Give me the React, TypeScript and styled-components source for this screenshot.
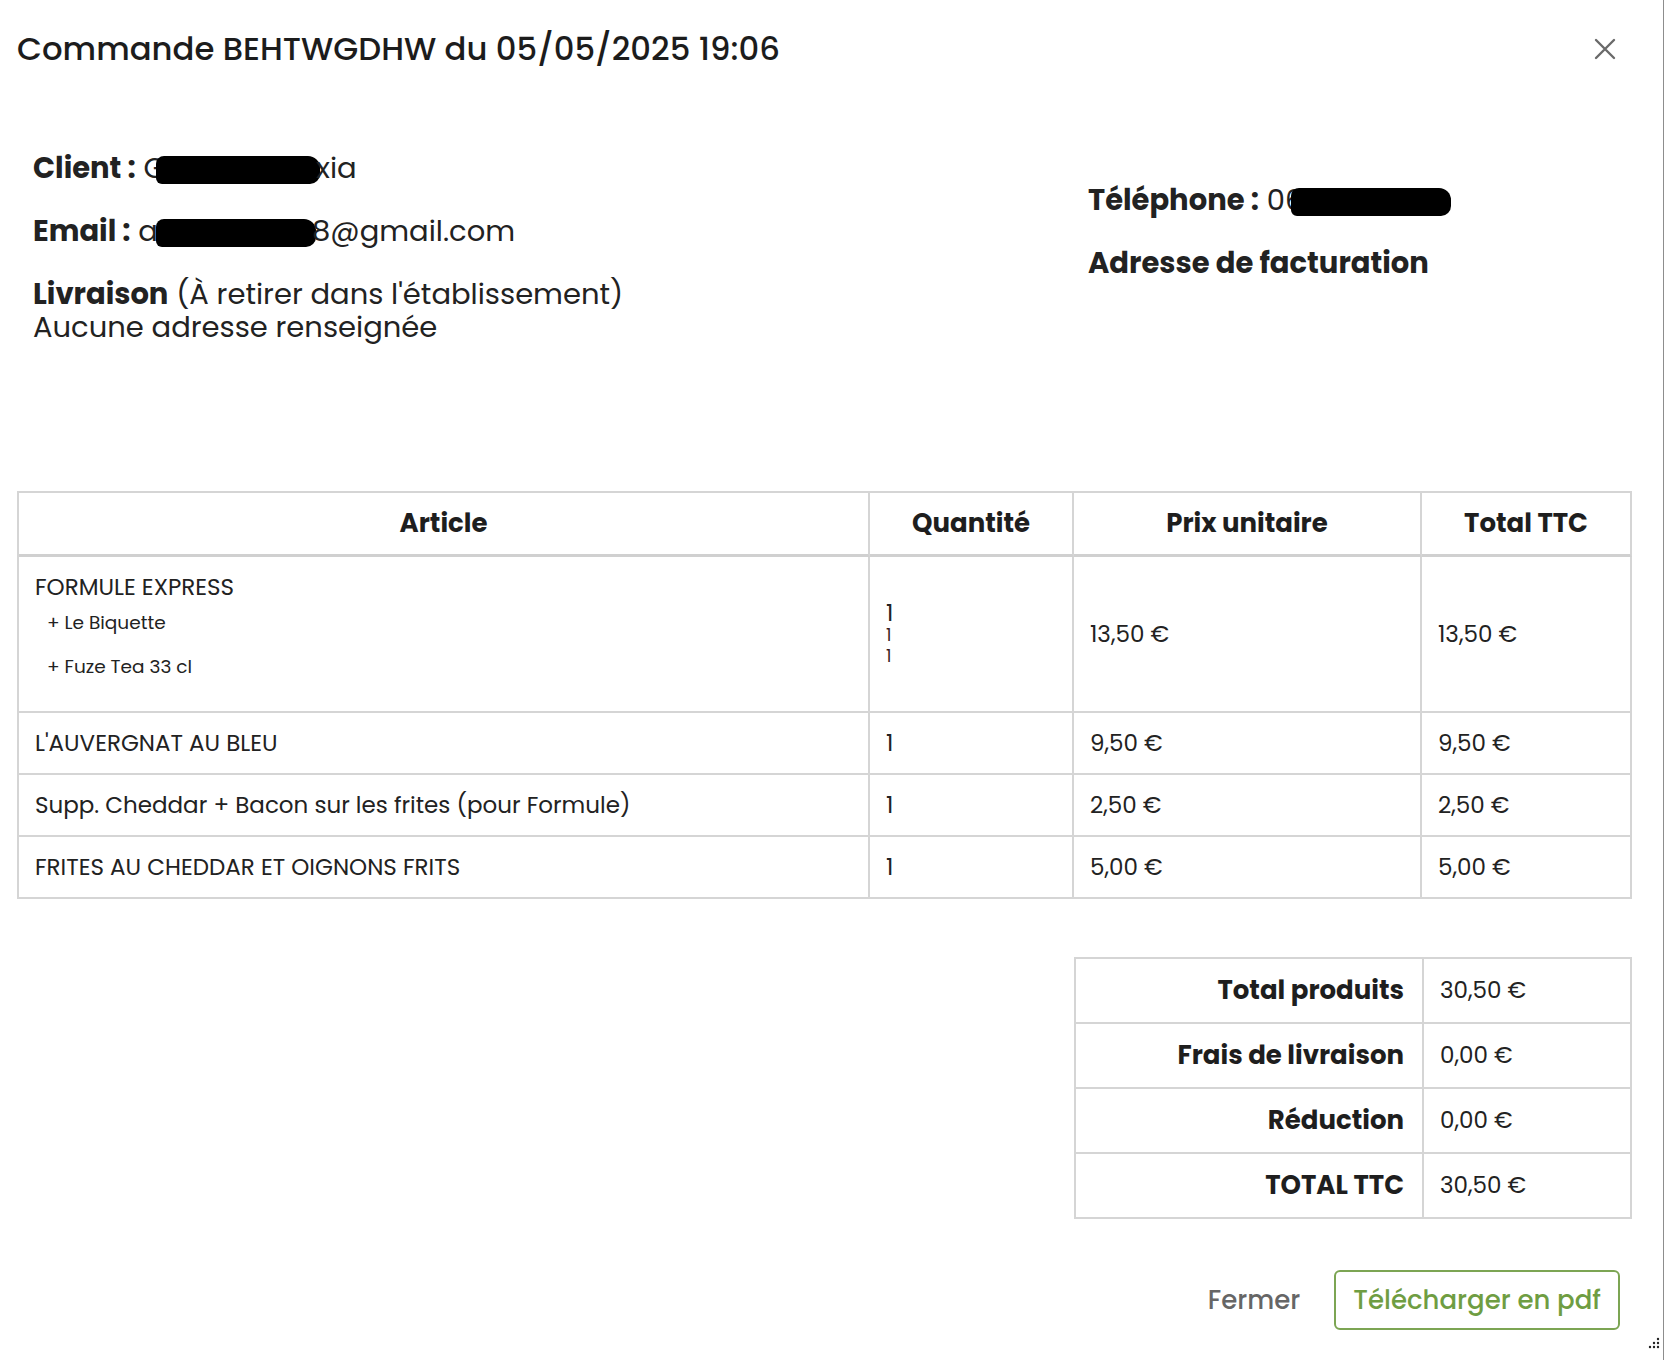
import React from "react";
import styled, { createGlobalStyle } from "styled-components";

const Global = createGlobalStyle`
  html, body { margin: 0; padding: 0; background: #fff; }
  body { font-family: "Poppins", "Open Sans", "Noto Sans", sans-serif; color: #222; }
  * { box-sizing: border-box; }
`;

const Dialog = styled.div`
  position: relative;
  width: 1664px;
  height: 1360px;
  background: #fff;
  border-right: 1px solid #8d8d8d;
`;

const Header = styled.div`
  display: flex;
  align-items: center;
  justify-content: space-between;
  height: 98px;
  padding: 0 46px 0 17px;
`;

const Title = styled.h1`
  margin: 0;
  font-size: 32.3px;
  font-weight: 500;
  color: #1c1c1c;
`;

const CloseBtn = styled.button`
  border: 0;
  background: none;
  padding: 0;
  width: 24px;
  height: 24px;
  display: flex;
  align-items: center;
  justify-content: center;
  cursor: pointer;
`;

const Body = styled.div`
  padding: 0 31px 0 17px;
`;

const InfoGrid = styled.div`
  display: grid;
  grid-template-columns: 1055px 1fr;
  padding-top: 54px;
`;

const InfoCol = styled.div<{ $offset?: number }>`
  padding-left: 16px;
  padding-top: ${(p) => p.$offset ?? 0}px;
`;

const InfoLine = styled.p`
  margin: 0 0 30px;
  font-size: 29px;
  line-height: 33px;
  color: #222;
  white-space: nowrap;
  &:last-child { margin-bottom: 0; }
`;

const Label = styled.strong`
  font-weight: 700;
  color: #222;
`;

const Redact = styled.span<{ $w: number; $ml: number }>`
  display: inline-block;
  width: ${(p) => p.$w}px;
  height: 28px;
  background: #000;
  border-radius: 8px 12px 10px 6px;
  vertical-align: -6px;
  margin: 0 -4px 0 ${(p) => p.$ml}px;
`;

const Table = styled.table`
  margin-top: 147px;
  width: 100%;
  border-collapse: separate;
  border-spacing: 0;
  border-top: 2px solid #d5d5d5;
  border-left: 2px solid #d5d5d5;
`;

const Th = styled.th<{ $w: number }>`
  width: ${(p) => p.$w}px;
  padding: 17px 16px;
  line-height: 27px;
  font-size: 26px;
  font-weight: 700;
  text-align: center;
  color: #1e1e1e;
  border-right: 2px solid #d5d5d5;
  border-bottom: 3px solid #d0d0d0;
`;

const Td = styled.td`
  padding: 18px 16px;
  line-height: 24px;
  vertical-align: middle;
  color: #222;
  border-right: 2px solid #d5d5d5;
  border-bottom: 2px solid #d5d5d5;
  font-size: 23px;
`;

const ArticleCell = styled(Td)`
  padding: 16px 16px 22px;
`;

const ArticleName = styled.div`
  line-height: 28px;
`;

const SubItem = styled.div`
  padding-left: 12px;
  height: 44px;
  line-height: 44px;
  font-size: 18.5px;
`;

const QtyMain = styled.div`
  line-height: 24px;
`;

const QtySub = styled.div`
  line-height: 21px;
  font-size: 17px;
  color: #3a1a1a;
`;

const TotalsTable = styled.table`
  margin: 58px 0 0 auto;
  width: 558px;
  border-collapse: separate;
  border-spacing: 0;
  border-top: 2px solid #d5d5d5;
  border-left: 2px solid #d5d5d5;
`;

const TotLabel = styled.th`
  width: 348px;
  padding: 18px 18px;
  line-height: 27px;
  font-size: 26px;
  font-weight: 700;
  text-align: right;
  color: #1e1e1e;
  border-right: 2px solid #d5d5d5;
  border-bottom: 2px solid #d5d5d5;
`;

const TotValue = styled.td`
  padding: 18px 16px;
  line-height: 27px;
  font-size: 23px;
  color: #222;
  border-right: 2px solid #d5d5d5;
  border-bottom: 2px solid #d5d5d5;
`;

const Footer = styled.div`
  display: flex;
  justify-content: flex-end;
  align-items: center;
  gap: 18px;
  margin-top: 51px;
  padding-right: 12px;
`;

const TextButton = styled.button`
  border: 0;
  background: none;
  padding: 0 16px;
  height: 60px;
  font-family: inherit;
  font-size: 26px;
  font-weight: 500;
  color: #666;
  cursor: pointer;
`;

const OutlineButton = styled.button`
  height: 60px;
  padding: 0 17px;
  border: 2px solid #7ca553;
  border-radius: 6px;
  background: #fff;
  font-family: inherit;
  font-size: 26px;
  font-weight: 500;
  color: #6f9d42;
  cursor: pointer;
`;

const ResizeHandle = styled.div`
  position: absolute;
  right: 2px;
  bottom: 14px;
  width: 14px;
  height: 14px;
`;

const items = [
  { name: "L'AUVERGNAT AU BLEU", qty: "1", unit: "9,50 €", total: "9,50 €" },
  { name: "Supp. Cheddar + Bacon sur les frites (pour Formule)", qty: "1", unit: "2,50 €", total: "2,50 €" },
  { name: "FRITES AU CHEDDAR ET OIGNONS FRITS", qty: "1", unit: "5,00 €", total: "5,00 €" },
];

const totals = [
  ["Total produits", "30,50 €"],
  ["Frais de livraison", "0,00 €"],
  ["Réduction", "0,00 €"],
  ["TOTAL TTC", "30,50 €"],
];

export default function App() {
  return (
    <>
      <Global />
      <Dialog>
        <Header>
          <Title>Commande BEHTWGDHW du 05/05/2025 19:06</Title>
          <CloseBtn aria-label="Fermer">
            <svg width="22" height="22" viewBox="0 0 22 22">
              <path d="M2 2 L20 20 M20 2 L2 20" stroke="#6a6a6a" strokeWidth="2.4" strokeLinecap="round" />
            </svg>
          </CloseBtn>
        </Header>
        <Body>
          <InfoGrid>
            <InfoCol>
              <InfoLine>
                <Label>Client :</Label> G<Redact $w={164} $ml={-10} />xia
              </InfoLine>
              <InfoLine>
                <Label>Email :</Label> a<Redact $w={160} $ml={-2} />8@gmail.com
              </InfoLine>
              <InfoLine>
                <Label>Livraison</Label> (À retirer dans l'établissement)
                <br />
                Aucune adresse renseignée
              </InfoLine>
            </InfoCol>
            <InfoCol $offset={32}>
              <InfoLine>
                <Label>Téléphone :</Label> 06<Redact $w={160} $ml={-12} />
              </InfoLine>
              <InfoLine>
                <Label>Adresse de facturation</Label>
              </InfoLine>
            </InfoCol>
          </InfoGrid>

          <Table>
            <thead>
              <tr>
                <Th $w={851}>Article</Th>
                <Th $w={204}>Quantité</Th>
                <Th $w={348}>Prix unitaire</Th>
                <Th $w={210}>Total TTC</Th>
              </tr>
            </thead>
            <tbody>
              <tr>
                <ArticleCell>
                  <ArticleName>FORMULE EXPRESS</ArticleName>
                  <SubItem>+ Le Biquette</SubItem>
                  <SubItem>+ Fuze Tea 33 cl</SubItem>
                </ArticleCell>
                <Td>
                  <QtyMain>1</QtyMain>
                  <QtySub>1</QtySub>
                  <QtySub>1</QtySub>
                </Td>
                <Td>13,50 €</Td>
                <Td>13,50 €</Td>
              </tr>
              {items.map((it) => (
                <tr key={it.name}>
                  <Td>{it.name}</Td>
                  <Td>{it.qty}</Td>
                  <Td>{it.unit}</Td>
                  <Td>{it.total}</Td>
                </tr>
              ))}
            </tbody>
          </Table>

          <TotalsTable>
            <tbody>
              {totals.map(([l, v]) => (
                <tr key={l}>
                  <TotLabel>{l}</TotLabel>
                  <TotValue>{v}</TotValue>
                </tr>
              ))}
            </tbody>
          </TotalsTable>

          <Footer>
            <TextButton>Fermer</TextButton>
            <OutlineButton>Télécharger en pdf</OutlineButton>
          </Footer>
        </Body>
        <ResizeHandle>
          <svg width="14" height="14" viewBox="0 0 14 14">
            <circle cx="11" cy="3" r="1.2" fill="#222" />
            <circle cx="7" cy="7" r="1.2" fill="#222" />
            <circle cx="11" cy="7" r="1.2" fill="#222" />
            <circle cx="3" cy="11" r="1.2" fill="#222" />
            <circle cx="7" cy="11" r="1.2" fill="#222" />
            <circle cx="11" cy="11" r="1.2" fill="#222" />
          </svg>
        </ResizeHandle>
      </Dialog>
    </>
  );
}
